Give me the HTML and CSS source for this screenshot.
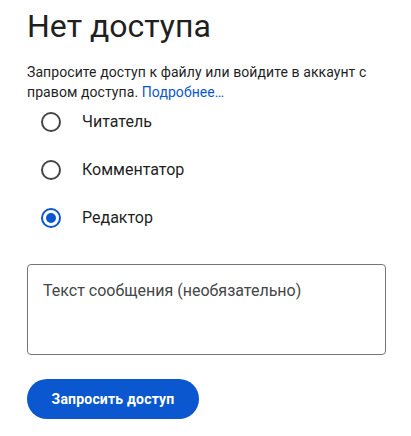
FILE: index.html
```html
<!DOCTYPE html>
<html lang="ru">
<head>
<meta charset="utf-8">
<link rel="stylesheet" href="styles.css">
</head>
<body>
<main class="page">
  <h1 class="title">Нет доступа</h1>
  <p class="desc">Запросите доступ к файлу или войдите в аккаунт с правом доступа. <a class="link" href="#">Подробнее…</a></p>
  <div class="roles">
    <label class="role"><span class="radio"></span><span class="role-text">Читатель</span></label>
    <label class="role"><span class="radio"></span><span class="role-text">Комментатор</span></label>
    <label class="role"><span class="radio checked"></span><span class="role-text">Редактор</span></label>
  </div>
  <div class="message"><span class="placeholder">Текст сообщения (необязательно)</span></div>
  <button class="submit">Запросить доступ</button>
</main>
</body>
</html>
```
FILE: styles.css
```css
html, body {
  margin: 0;
  padding: 0;
  background: #fff;
}
body {
  font-family: Roboto, "Noto Sans", Arial, sans-serif;
  color: #1f1f1f;
}
.page {
  padding: 6px 25px 0 27px;
  display: flex;
  flex-direction: column;
  align-items: flex-start;
}
.title {
  margin: 0;
  font-size: 32px;
  font-weight: 400;
  line-height: 40px;
  color: #1f1f1f;
}
.desc {
  margin: 16px 0 0 0;
  font-size: 14px;
  line-height: 20px;
  letter-spacing: 0.08px;
  color: #1f1f1f;
  width: 352px;
}
.link {
  color: #0b57d0;
  text-decoration: none;
}
.roles {
  display: flex;
  flex-direction: column;
  gap: 28px;
  margin-top: 10px;
  padding-left: 14px;
}
.role {
  display: flex;
  align-items: center;
  gap: 21px;
  height: 20px;
}
.radio {
  box-sizing: border-box;
  width: 20px;
  height: 20px;
  border: 2px solid #444746;
  border-radius: 50%;
  display: flex;
  align-items: center;
  justify-content: center;
}
.radio.checked {
  border-color: #0b57d0;
}
.radio.checked::after {
  content: "";
  width: 10px;
  height: 10px;
  border-radius: 50%;
  background: #0b57d0;
}
.role-text {
  font-size: 16px;
  line-height: 20px;
  color: #1f1f1f;
}
.message {
  box-sizing: border-box;
  margin-top: 36px;
  width: 359px;
  height: 91px;
  border: 1px solid #747775;
  border-radius: 4px;
  padding: 16px 15px;
}
.placeholder {
  font-size: 16px;
  line-height: 20px;
  color: #444746;
}
.submit {
  margin-top: 24px;
  height: 40px;
  width: 172px;
  border: none;
  border-radius: 20px;
  background: #0b57d0;
  color: #fff;
  font-family: Roboto, "Noto Sans", Arial, sans-serif;
  font-size: 14px;
  font-weight: 700;
  letter-spacing: 0.2px;
  padding: 0;
}
```
